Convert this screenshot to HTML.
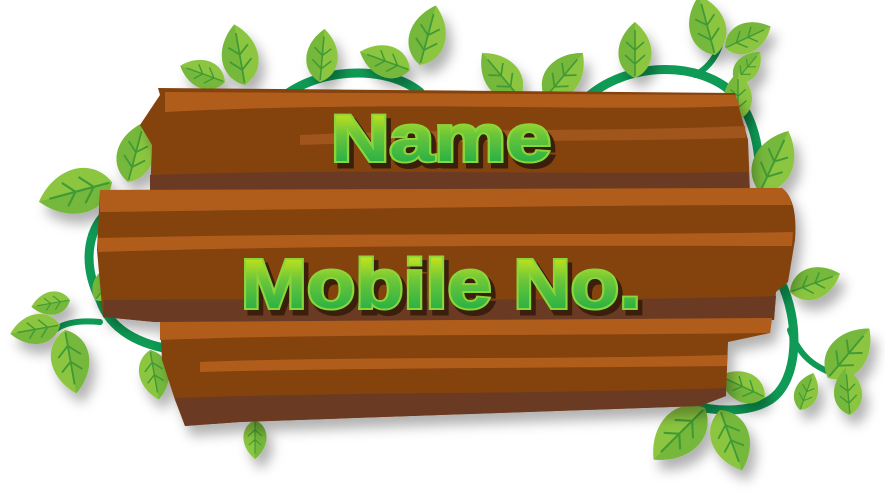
<!DOCTYPE html>
<html><head><meta charset="utf-8"><style>
html,body{margin:0;padding:0;background:#fff;width:885px;height:502px;overflow:hidden}
svg{display:block}
</style></head><body>
<svg width="885" height="502" viewBox="0 0 885 502" xmlns="http://www.w3.org/2000/svg">
<defs>
<linearGradient id="tg" x1="0" y1="0" x2="0" y2="1">
<stop offset="0" stop-color="#f2f20a"/><stop offset="0.45" stop-color="#6cc63a"/><stop offset="1" stop-color="#0aa84a"/>
</linearGradient>
<g id="leaf">
<path d="M0,0 C-22,-10 -22,-38 0,-56 C22,-38 22,-10 0,0Z" fill="#8cc63f"/>
<path d="M0,0 C-22,-10 -22,-38 0,-56 L0,0Z" fill="#76b83a"/>
<path d="M0,-2 L0,-48 M0,-14 L-10,-23 M0,-14 L10,-23 M0,-28 L-9,-36 M0,-28 L9,-36" stroke="#3f9a35" stroke-width="1.6" fill="none"/>
</g>
<filter id="sh" x="-20%" y="-20%" width="140%" height="140%"><feDropShadow dx="6" dy="10" stdDeviation="6" flood-color="#000" flood-opacity="0.3"/></filter>
</defs>

<g fill="none" stroke="#0f9a55" stroke-width="9" stroke-linecap="round">
<path d="M270,110 C300,70 380,60 420,92"/>
<path d="M590,95 C630,62 700,60 735,95 C755,120 760,150 760,185"/>
<path d="M100,300 C80,260 90,225 110,210"/>
<path d="M100,300 C110,330 140,345 175,350"/>
<path d="M780,280 C800,320 800,380 770,400 C745,415 710,410 690,405"/>
<path d="M790,330 C800,360 820,370 845,378" stroke-width="6"/>
<path d="M100,322 C80,320 65,322 55,330" stroke-width="6"/>
<path d="M720,45 C715,60 705,70 695,75" stroke-width="6"/>
</g>

<g filter="url(#sh)">
<use href="#leaf" transform="translate(245,85) rotate(-10) scale(1.1)"/>
<use href="#leaf" transform="translate(225,82) rotate(-70) scale(0.85)"/>
<use href="#leaf" transform="translate(320,82) rotate(5) scale(0.95)"/>
<use href="#leaf" transform="translate(410,70) rotate(-70) scale(0.95)"/>
<use href="#leaf" transform="translate(420,65) rotate(15) scale(1.1)"/>
<use href="#leaf" transform="translate(520,98) rotate(-40) scale(1.05)"/>
<use href="#leaf" transform="translate(545,98) rotate(40) scale(1.05)"/>
<use href="#leaf" transform="translate(635,78) rotate(0) scale(1.0)"/>
<use href="#leaf" transform="translate(715,55) rotate(-15) scale(1.1)"/>
<use href="#leaf" transform="translate(725,48) rotate(65) scale(0.9)"/>
<use href="#leaf" transform="translate(735,82) rotate(40) scale(0.7)"/>
<use href="#leaf" transform="translate(738,120) rotate(0) scale(0.85)"/>
<use href="#leaf" transform="translate(760,192) rotate(25) scale(1.2)"/>
<use href="#leaf" transform="translate(790,292) rotate(70) scale(0.95)"/>
<use href="#leaf" transform="translate(828,378) rotate(40) scale(1.15)"/>
<use href="#leaf" transform="translate(850,415) rotate(-5) scale(0.85)"/>
<use href="#leaf" transform="translate(765,397) rotate(-65) scale(0.9)"/>
<use href="#leaf" transform="translate(800,410) rotate(20) scale(0.7)"/>
<use href="#leaf" transform="translate(705,408) rotate(-135) scale(1.3)"/>
<use href="#leaf" transform="translate(720,410) rotate(160) scale(1.15)"/>
<use href="#leaf" transform="translate(112,182) rotate(-105) scale(1.35)"/>
<use href="#leaf" transform="translate(128,182) rotate(15) scale(1.1)"/>
<use href="#leaf" transform="translate(95,300) rotate(40) scale(0.85)"/>
<use href="#leaf" transform="translate(70,300) rotate(-100) scale(0.7)"/>
<use href="#leaf" transform="translate(60,325) rotate(-100) scale(0.9)"/>
<use href="#leaf" transform="translate(65,330) rotate(170) scale(1.15)"/>
<use href="#leaf" transform="translate(150,350) rotate(170) scale(0.9)"/>
<use href="#leaf" transform="translate(255,420) rotate(180) scale(0.7)"/>
</g>

<g filter="url(#sh)">
<path d="M160,95 L158,88 L735,93 L748,140 L750,192 L150,195 L152,145 L140,125 Z" fill="#84420f"/>
<path d="M165,92 L735,95 L740,106 C600,112 400,100 165,112 Z" fill="#b05d1f"/>
<path d="M300,135 C450,128 600,132 745,126 L746,138 C600,142 450,140 300,145 Z" fill="#a0541c"/>
<path d="M150,175 C350,168 550,175 748,172 L750,192 L150,195Z" fill="#6b3a22"/>
<path d="M100,190 L782,188 Q798,200 795,240 L788,282 L776,292 L774,320 L155,322 L103,317 L97,250 Z" fill="#84420f"/>
<path d="M100,190 L782,188 Q790,195 792,205 C600,205 400,208 100,212 Z" fill="#b05d1f"/>
<path d="M98,238 C350,232 600,236 793,232 L792,246 C600,246 350,244 98,252 Z" fill="#b05d1f"/>
<path d="M104,300 C350,298 600,302 776,296 L774,320 L155,322 L103,317Z" fill="#6b3a22"/>
<path d="M160,322 L772,318 L770,333 L728,342 L726,396 L700,406 L240,422 L185,426 L175,400 L162,360 Z" fill="#84420f"/>
<path d="M160,322 L772,318 L770,333 C500,336 300,334 160,340Z" fill="#b05d1f"/>
<path d="M200,362 C350,356 550,360 727,355 L727,366 C550,368 350,368 200,372 Z" fill="#b05d1f"/>
<path d="M175,398 C350,392 550,394 726,388 L726,396 L700,406 L240,422 L185,426 Z" fill="#6b3a22"/>
</g>

<g font-family="'Liberation Sans', sans-serif" font-weight="bold">
<text x="335" y="166" font-size="66" textLength="220" lengthAdjust="spacingAndGlyphs" fill="#3a200c" stroke="#3a200c" stroke-width="5">Name</text>
<text x="331" y="161" font-size="66" textLength="220" lengthAdjust="spacingAndGlyphs" fill="url(#tg)" stroke="#8ad63a" stroke-width="4" paint-order="stroke">Name</text>
<text x="331" y="161" font-size="66" textLength="220" lengthAdjust="spacingAndGlyphs" fill="url(#tg)">Name</text>
<text x="245" y="313" font-size="70" textLength="400" lengthAdjust="spacingAndGlyphs" fill="#3a200c" stroke="#3a200c" stroke-width="5">Mobile No.</text>
<text x="241" y="308" font-size="70" textLength="400" lengthAdjust="spacingAndGlyphs" fill="url(#tg)" stroke="#8ad63a" stroke-width="4" paint-order="stroke">Mobile No.</text>
<text x="241" y="308" font-size="70" textLength="400" lengthAdjust="spacingAndGlyphs" fill="url(#tg)">Mobile No.</text>
</g>
</svg>
</body></html>
